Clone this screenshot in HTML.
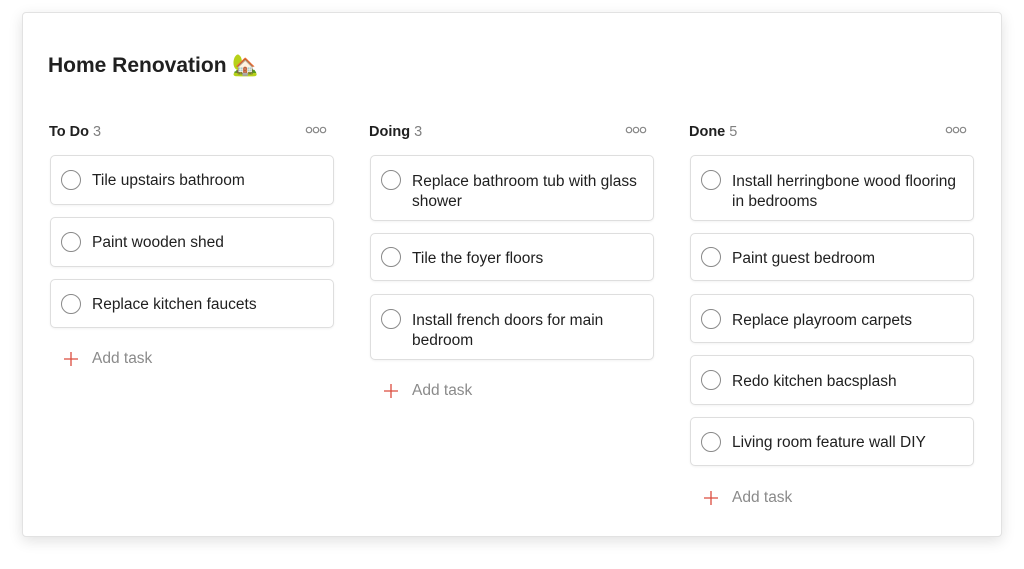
<!DOCTYPE html>
<html><head><style>
*{margin:0;padding:0;box-sizing:border-box}
body{width:1024px;height:569px;background:#fff;font-family:"Liberation Sans",sans-serif;position:relative;overflow:hidden}
.panel{position:absolute;left:22px;top:12px;width:980px;height:525px;background:#fff;border:1px solid #e2e2e2;border-radius:4px;box-shadow:0 4px 14px rgba(0,0,0,.12)}
h1{position:absolute;left:48px;top:54px;font-size:21px;font-weight:bold;color:#202020}
.hd{position:absolute;top:124px;font-size:14.5px;font-weight:bold;color:#202020}
.hd span{font-weight:normal;color:#808080}
.dots{position:absolute;top:125px}
.card{position:absolute;width:284px;border:1px solid #dedede;border-radius:5px;background:#fff;box-shadow:0 1px 2px rgba(0,0,0,.05)}
.card i{position:absolute;left:10px;width:20px;height:20px;border:1.3px solid #8a8a8a;border-radius:50%}
.card p{position:absolute;left:41px;right:8px;font-size:15.5px;line-height:20px;color:#202020;margin-top:1px}
.add{position:absolute;font-size:15.5px;color:#8a8a8a}
.add svg{position:absolute;left:-29px;top:1px}
</style></head><body>
<div class="panel"></div>
<h1>Home Renovation 🏡</h1>

<div class="hd" style="left:49px">To Do <span>3</span></div>
<div class="hd" style="left:369px">Doing <span>3</span></div>
<div class="hd" style="left:689px">Done <span>5</span></div>
<svg class="dots" style="left:305px" width="24" height="10"><g fill="none" stroke="#888" stroke-width="1.2"><circle cx="4" cy="5" r="2.7"/><circle cx="11" cy="5" r="2.7"/><circle cx="18" cy="5" r="2.7"/></g></svg>
<svg class="dots" style="left:625px" width="24" height="10"><g fill="none" stroke="#888" stroke-width="1.2"><circle cx="4" cy="5" r="2.7"/><circle cx="11" cy="5" r="2.7"/><circle cx="18" cy="5" r="2.7"/></g></svg>
<svg class="dots" style="left:945px" width="24" height="10"><g fill="none" stroke="#888" stroke-width="1.2"><circle cx="4" cy="5" r="2.7"/><circle cx="11" cy="5" r="2.7"/><circle cx="18" cy="5" r="2.7"/></g></svg>

<div class="card" style="left:50px;top:155px;height:50px"><i style="top:14px"></i><p style="top:14px">Tile upstairs bathroom</p></div>
<div class="card" style="left:50px;top:217px;height:50px"><i style="top:14px"></i><p style="top:14px">Paint wooden shed</p></div>
<div class="card" style="left:50px;top:279px;height:49px"><i style="top:14px"></i><p style="top:14px">Replace kitchen faucets</p></div>
<div class="add" style="left:92px;top:350px"><svg width="16" height="16"><path d="M8 1V15M1 8H15" stroke="#dc4c3e" stroke-width="1.3"/></svg>Add task</div>

<div class="card" style="left:370px;top:155px;height:66px"><i style="top:14px"></i><p style="top:15px">Replace bathroom tub with glass shower</p></div>
<div class="card" style="left:370px;top:233px;height:48px"><i style="top:13px"></i><p style="top:14px">Tile the foyer floors</p></div>
<div class="card" style="left:370px;top:294px;height:66px"><i style="top:14px"></i><p style="top:15px">Install french doors for main bedroom</p></div>
<div class="add" style="left:412px;top:382px"><svg width="16" height="16"><path d="M8 1V15M1 8H15" stroke="#dc4c3e" stroke-width="1.3"/></svg>Add task</div>

<div class="card" style="left:690px;top:155px;height:66px"><i style="top:14px"></i><p style="top:15px">Install herringbone wood flooring in bedrooms</p></div>
<div class="card" style="left:690px;top:233px;height:48px"><i style="top:13px"></i><p style="top:14px">Paint guest bedroom</p></div>
<div class="card" style="left:690px;top:294px;height:49px"><i style="top:14px"></i><p style="top:15px">Replace playroom carpets</p></div>
<div class="card" style="left:690px;top:355px;height:50px"><i style="top:14px"></i><p style="top:15px">Redo kitchen bacsplash</p></div>
<div class="card" style="left:690px;top:417px;height:49px"><i style="top:14px"></i><p style="top:14px">Living room feature wall DIY</p></div>
<div class="add" style="left:732px;top:489px"><svg width="16" height="16"><path d="M8 1V15M1 8H15" stroke="#dc4c3e" stroke-width="1.3"/></svg>Add task</div>
</body></html>
